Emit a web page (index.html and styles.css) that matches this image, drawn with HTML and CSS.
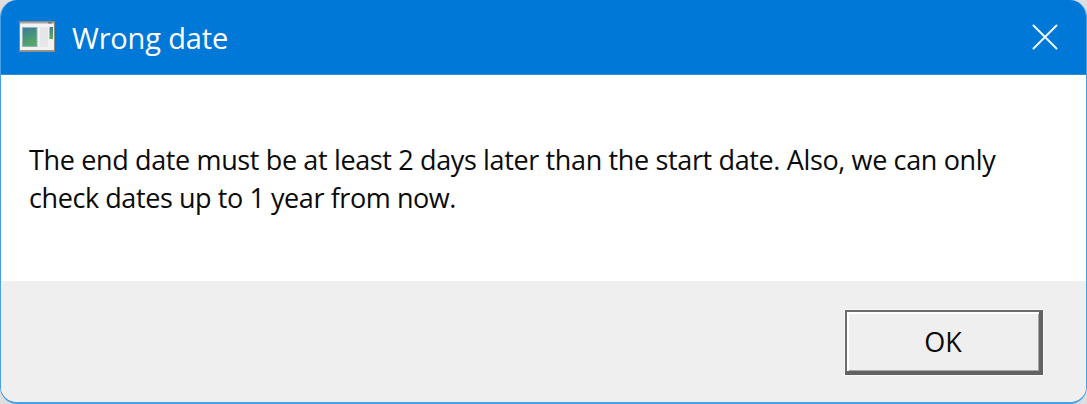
FILE: index.html
```html
<!DOCTYPE html>
<html lang="en">
<head>
<meta charset="utf-8">
<title>Wrong date</title>
<link rel="stylesheet" href="styles.css">
</head>
<body>
<div class="dialog">
  <header class="titlebar">
    <svg class="app-icon" width="36" height="31" viewBox="0 0 36 31">
      <defs>
        <linearGradient id="pane" x1="0" y1="0" x2="0.3" y2="1">
          <stop offset="0" stop-color="#3b78a4"/>
          <stop offset="0.45" stop-color="#43917c"/>
          <stop offset="1" stop-color="#58a866"/>
        </linearGradient>
      </defs>
      <rect x="0.5" y="0.5" width="35" height="30" fill="#f3f2f3" stroke="#8b8781"/>
      <rect x="1" y="1" width="34" height="1.5" fill="#aaa5a2"/>
      <rect x="29" y="1" width="4" height="1.5" fill="#77777c"/>
      <rect x="1" y="29" width="34" height="1.5" fill="#99958f"/>
      <rect x="3.5" y="6.5" width="14.5" height="19" fill="url(#pane)" stroke="#91b3ba"/>
      <rect x="21" y="6" width="8" height="20" fill="#e5e6e8"/>
      <rect x="30.5" y="6" width="3.5" height="12" fill="url(#pane)"/>
    </svg>
    <h1 class="title">Wrong date</h1>
    <svg class="close" width="26" height="26" viewBox="0 0 26 26">
      <path d="M1.5 1.5L24.5 24.5M24.5 1.5L1.5 24.5" fill="none" stroke="#eef6fd" stroke-width="2" stroke-linecap="round"/>
    </svg>
  </header>
  <main class="message">
    <p class="line line-first">The end date must be at least 2 days later than the start date. Also, we can only</p>
    <p class="line line-second">check dates up to 1 year from now.</p>
  </main>
  <footer class="actions">
    <button class="ok" type="button"><span class="ok-label">OK</span></button>
  </footer>
</div>
</body>
</html>
```
FILE: styles.css
```css
* {
  box-sizing: border-box;
}

body {
  margin: 0;
  background: #dedede;
  font-family: "Open Sans", "Noto Sans", sans-serif;
}

.dialog {
  display: flex;
  flex-direction: column;
  width: 1087px;
  height: 404px;
  overflow: hidden;
  border: 1px solid #4aa0e4;
  border-top: 0;
  border-bottom: 2px solid #4aa0e4;
  border-radius: 17px;
  background: #fff;
}

.titlebar {
  display: flex;
  flex: none;
  align-items: center;
  height: 75px;
  padding: 0 28px 0 18px;
  border-bottom: 1px solid #2a8fde;
  background: #0078d7;
  color: #fff;
}

.app-icon {
  flex: none;
  margin-top: -2px;
}

.title {
  flex: 1;
  margin: 2px 0 0 17px;
  font-size: 29px;
  font-weight: 400;
  letter-spacing: -0.15px;
  line-height: 40px;
}

.close {
  flex: none;
}

.message {
  flex: 1;
  padding: 66px 28px 0;
  color: #0a0a0a;
}

.line {
  width: max-content;
  margin: 0;
  font-size: 27px;
  line-height: 38px;
  white-space: nowrap;
}

.line-first {
  letter-spacing: -0.36px;
}

.line-second {
  letter-spacing: -0.42px;
}

.actions {
  display: flex;
  flex: none;
  justify-content: flex-end;
  height: 121px;
  padding: 29px 43px 0 0;
  background: #efefef;
}

.ok {
  width: 198px;
  height: 65px;
  padding: 0;
  border: 2px solid #6c6c6c;
  border-right: 4px solid #626262;
  border-bottom: 4px solid #626262;
  background: #efefef;
  box-shadow: inset 2px 2px #fff, inset -1px -1px #a6a6a6, 0 0 0 1px #f8f8f8;
  color: #0a0a0a;
  font: 27px/38px "Open Sans", "Noto Sans", sans-serif;
}

.ok-label {
  display: inline-block;
}
```
